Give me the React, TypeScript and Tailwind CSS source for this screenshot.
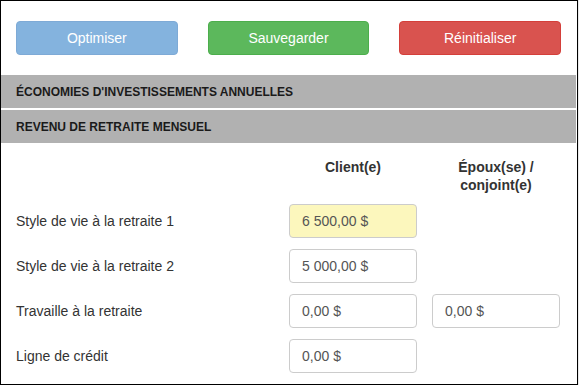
import { Fragment } from "react";

const rows = [
  { label: "Style de vie à la retraite 1", client: "6 500,00 $", spouse: null, highlight: true },
  { label: "Style de vie à la retraite 2", client: "5 000,00 $", spouse: null, highlight: false },
  { label: "Travaille à la retraite", client: "0,00 $", spouse: "0,00 $", highlight: false },
  { label: "Ligne de crédit", client: "0,00 $", spouse: null, highlight: false },
];

const MoneyInput = ({ value, highlight }: { value: string; highlight?: boolean }) => (
  <div
    className={
      highlight
        ? "h-[34px] w-[128px] rounded-[4px] border border-[#cccccc] bg-[#fcf7bd] px-3 flex items-center text-[14px] text-[#555555]"
        : "h-[34px] w-[128px] rounded-[4px] border border-[#cccccc] bg-white px-3 flex items-center text-[14px] text-[#555555]"
    }
  >
    {value}
  </div>
);

export default function App() {
  return (
    <div className="w-[579px] h-[385px] bg-[#e9e9e9] font-['Liberation_Sans',Arial,sans-serif]">
      <div className="w-[578px] h-[385px] border border-black bg-white pr-[1px] overflow-hidden">
        {/* action buttons */}
        <div className="grid grid-cols-3 gap-x-[30px] px-[15px] pt-[20px] pb-[20px]">
          <button className="h-[34px] rounded-[4px] border border-[#7eaad6] bg-[#84b3de] text-[14px] text-white">
            Optimiser
          </button>
          <button className="h-[34px] rounded-[4px] border border-[#4cae4c] bg-[#5cb85c] text-[14px] text-white">
            Sauvegarder
          </button>
          <button className="h-[34px] rounded-[4px] border border-[#d43f3a] bg-[#d9534f] text-[14px] text-white">
            Réinitialiser
          </button>
        </div>

        {/* sections */}
        <div className="flex flex-col gap-[2px]">
          <div className="h-[33px] bg-[#b1b1b1] px-[15px] flex items-center text-[12px] font-bold text-[#1a1a1a]">
            ÉCONOMIES D'INVESTISSEMENTS ANNUELLES
          </div>
          <div className="h-[33px] bg-[#b1b1b1] px-[15px] flex items-center text-[12px] font-bold text-[#1a1a1a]">
            REVENU DE RETRAITE MENSUEL
          </div>
        </div>

        <div className="grid grid-cols-[258px_128px_128px] gap-x-[15px] gap-y-[11px] px-[15px] pt-[15px] items-center text-[14px] text-[#333333]">
          <div />
          <div className="self-start text-center font-bold leading-[18px]">Client(e)</div>
          <div className="text-center font-bold leading-[18px] mb-[-1px]">
            Époux(se) /<br />
            conjoint(e)
          </div>

          {rows.map((r) => (
            <Fragment key={r.label}>
              <div>{r.label}</div>
              <MoneyInput value={r.client} highlight={r.highlight} />
              <div>{r.spouse ? <MoneyInput value={r.spouse} /> : null}</div>
            </Fragment>
          ))}
        </div>
      </div>
    </div>
  );
}
